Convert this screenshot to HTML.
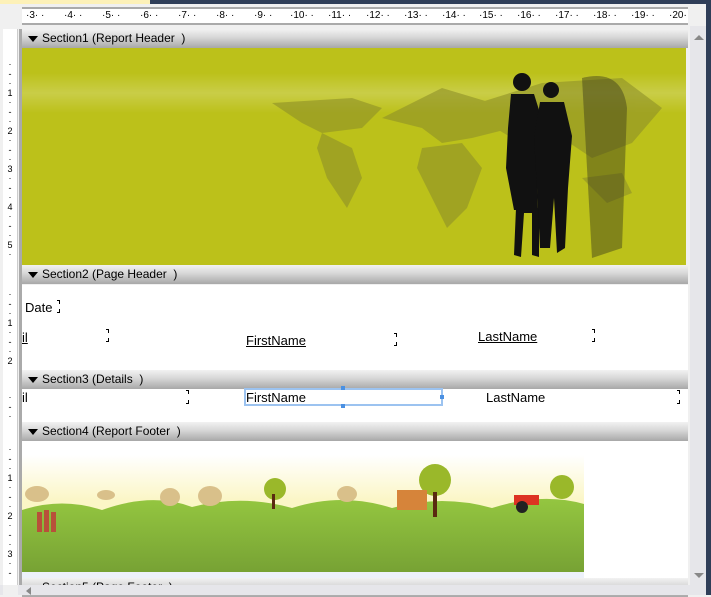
<!DOCTYPE html>
<html><head><style>
*{margin:0;padding:0;box-sizing:border-box}
body{width:711px;height:595px;overflow:hidden;background:#f0f0f0;font-family:"Liberation Sans",sans-serif;position:relative}
.a{position:absolute}
.bar{position:absolute;left:22px;width:666px;height:19px;background:linear-gradient(#f2f2f2,#d6d6d6 45%,#a8a8a8);font-size:12px;color:#000;line-height:19px;padding-left:20px}
.bar:before{content:"";position:absolute;left:6px;top:7px;border-left:5px solid transparent;border-right:5px solid transparent;border-top:6px solid #000}
.t{position:absolute;font-size:13px;color:#000}
.u{text-decoration:underline}
.bt{position:absolute;width:3px;height:4px;border-top:1px solid #000;border-right:1px solid #000}
.bb{position:absolute;width:3px;height:4px;border-bottom:1px solid #000;border-right:1px solid #000}
</style></head><body>
<div class="a" style="left:0;top:0;width:150px;height:4px;background:#fdf1b8"></div>
<div class="a" style="left:150px;top:0;width:561px;height:4px;background:#2f3e58"></div>
<div class="a" style="left:706px;top:0;width:5px;height:595px;background:#2f3e58"></div>
<div class="a" style="left:22px;top:7px;width:666px;height:18px;background:#fff;border-top:2px solid #aaa;border-bottom:2px solid #aaa"></div>
<div class="a" style="left:3px;top:29px;width:15px;height:556px;background:#fff;border-right:1px solid #ccc"></div>
<div class="a" style="left:19px;top:29px;width:3px;height:556px;background:#aaa"></div>
<div class="a" style="left:690px;top:26px;width:16px;height:559px;background:#e6e6ea"></div>
<div class="a" style="left:694px;top:35px;border-left:5px solid transparent;border-right:5px solid transparent;border-bottom:5px solid #888"></div>
<div class="a" style="left:694px;top:573px;border-left:5px solid transparent;border-right:5px solid transparent;border-top:5px solid #888"></div>

<div class="bar" style="top:29px">Section1 (Report Header&nbsp; )</div>
<div class="a" style="left:22px;top:48px;width:664px;height:217px;background:#bcc11a;overflow:hidden">
<div class="a" style="left:0;top:25px;width:664px;height:40px;background:linear-gradient(rgba(255,255,255,0),rgba(255,255,255,.2),rgba(255,255,255,0))"></div>
<svg class="a" style="left:0;top:0" width="664" height="217">
<g fill="#8e9028" opacity=".6">
<path d="M250 55 L330 50 L360 60 L340 80 L300 85 L280 75 Z"/>
<path d="M300 85 L330 100 L340 130 L325 160 L305 130 L295 100 Z"/>
<path d="M360 70 L420 40 L470 55 L490 80 L450 90 L420 95 L400 80 Z"/>
<path d="M400 100 L440 95 L460 120 L445 160 L425 180 L410 150 L395 120 Z"/>
<path d="M440 60 L520 35 L600 30 L640 60 L610 95 L570 110 L540 90 L490 90 Z"/>
<path d="M560 130 L600 125 L610 145 L585 155 Z"/>
</g>
<g fill="#3a3a1a" opacity=".45"><path d="M560 30 Q600 20 605 60 L600 200 L570 210 Z"/></g>
<g fill="#111">
<circle cx="500" cy="34" r="9"/>
<path d="M489 46 L512 46 L522 78 L514 100 L516 162 L504 162 L492 162 L484 120 L486 80 Z"/>
<path d="M494 160 L492 207 L499 209 L502 165 L510 165 L510 207 L517 209 L517 160 Z"/>
<circle cx="529" cy="42" r="8"/>
<path d="M518 54 L542 54 L550 88 L546 140 L543 200 L535 205 L532 150 L528 200 L518 200 L515 140 L512 90 Z"/>
</g>
</svg>
</div>

<div class="bar" style="top:265px">Section2 (Page Header&nbsp; )</div>
<div class="a" style="left:22px;top:285px;width:666px;height:85px;background:#fff"></div>
<div class="t" style="left:25px;top:300px">Date</div>
<div class="bt" style="left:57px;top:300px"></div><div class="bb" style="left:57px;top:309px"></div>
<div class="t u" style="left:22px;top:330px">il</div>
<div class="bt" style="left:106px;top:329px"></div><div class="bb" style="left:106px;top:338px"></div>
<div class="t u" style="left:246px;top:333px">FirstName</div>
<div class="bt" style="left:394px;top:333px"></div><div class="bb" style="left:394px;top:342px"></div>
<div class="t u" style="left:478px;top:329px">LastName</div>
<div class="bt" style="left:592px;top:329px"></div><div class="bb" style="left:592px;top:338px"></div>

<div class="bar" style="top:370px">Section3 (Details&nbsp; )</div>
<div class="a" style="left:22px;top:389px;width:666px;height:33px;background:#fff"></div>
<div class="t" style="left:22px;top:390px">il</div>
<div class="bt" style="left:186px;top:390px"></div><div class="bb" style="left:186px;top:400px"></div>
<div class="a" style="left:244px;top:388px;width:199px;height:18px;border:2px solid #9cc3f0"></div>
<div class="a" style="left:341px;top:386px;width:4px;height:4px;background:#4a90e2"></div>
<div class="a" style="left:341px;top:404px;width:4px;height:4px;background:#4a90e2"></div>
<div class="a" style="left:440px;top:395px;width:4px;height:4px;background:#4a90e2"></div>
<div class="t" style="left:246px;top:390px">FirstName</div>
<div class="t" style="left:486px;top:390px">LastName</div>
<div class="bt" style="left:677px;top:390px"></div><div class="bb" style="left:677px;top:400px"></div>

<div class="bar" style="top:422px">Section4 (Report Footer&nbsp; )</div>
<div class="a" style="left:22px;top:441px;width:666px;height:137px;background:#fff"></div>
<div class="a" style="left:22px;top:442px;width:562px;height:130px;background:linear-gradient(#fff 10%,#fbf6c6 45%,#fbf6c6 55%);overflow:hidden">
<svg class="a" style="left:0;top:0" width="562" height="130">
<defs><linearGradient id="g" x1="0" y1="0" x2="0" y2="1"><stop offset="0" stop-color="#94c640"/><stop offset="1" stop-color="#77a234"/></linearGradient></defs>
<path d="M0 68 Q40 55 80 68 Q130 50 170 65 Q220 52 270 66 Q320 50 370 66 Q420 52 470 66 Q520 50 562 62 L562 130 L0 130Z" fill="url(#g)"/>
<g fill="#d9c08a"><ellipse cx="15" cy="52" rx="12" ry="8"/><ellipse cx="84" cy="53" rx="9" ry="5"/><ellipse cx="148" cy="55" rx="10" ry="9"/><ellipse cx="325" cy="52" rx="10" ry="8"/><ellipse cx="188" cy="54" rx="12" ry="10"/></g>
<g fill="#9ab82a"><circle cx="253" cy="47" r="11"/><circle cx="413" cy="38" r="16"/><circle cx="540" cy="45" r="12"/></g>
<rect x="250" y="52" width="3" height="15" fill="#5a2a10"/><rect x="411" y="50" width="4" height="25" fill="#5a2a10"/>
<rect x="375" y="48" width="30" height="20" fill="#d6843a"/>
<g fill="#b8503a"><rect x="15" y="70" width="5" height="20"/><rect x="22" y="68" width="5" height="22"/><rect x="29" y="70" width="5" height="20"/></g>
<rect x="492" y="53" width="25" height="10" fill="#d32"/><circle cx="500" cy="65" r="6" fill="#222"/>
</svg>
</div>
<div class="a" style="left:22px;top:572px;width:562px;height:6px;background:#edf1fa"></div>
<div class="bar" style="top:578px">Section5 (Page Footer&nbsp; )</div>
<div class="a" style="left:0;top:585px;width:706px;height:10px;background:#e6e6ea"></div>
<div class="a" style="left:26px;top:587px;border-top:4px solid transparent;border-bottom:4px solid transparent;border-right:5px solid #888"></div>
<div class="a" style="left:3px;top:585px;width:15px;height:10px;background:#f0f0f0"></div>

<div class="a" style="left:22px;top:10px;width:666px;height:12px;font-size:10px;line-height:12px;color:#000;white-space:nowrap">
<span class="a" style="left:4px">·3· ·</span><span class="a" style="left:42px">·4· ·</span><span class="a" style="left:80px">·5· ·</span><span class="a" style="left:118px">·6· ·</span><span class="a" style="left:156px">·7· ·</span><span class="a" style="left:194px">·8· ·</span><span class="a" style="left:232px">·9· ·</span><span class="a" style="left:268px">·10· ·</span><span class="a" style="left:306px">·11· ·</span><span class="a" style="left:344px">·12· ·</span><span class="a" style="left:382px">·13· ·</span><span class="a" style="left:420px">·14· ·</span><span class="a" style="left:457px">·15· ·</span><span class="a" style="left:495px">·16· ·</span><span class="a" style="left:533px">·17· ·</span><span class="a" style="left:571px">·18· ·</span><span class="a" style="left:609px">·19· ·</span><span class="a" style="left:647px">·20·</span>
</div>
<div class="a" style="left:4px;top:60px;width:12px;font-size:9px;line-height:9.5px;text-align:center;color:#000">·<br>-<br>·<br>1<br>·<br>-<br>·<br>2<br>·<br>-<br>·<br>3<br>·<br>-<br>·<br>4<br>·<br>-<br>·<br>5<br>·</div>
<div class="a" style="left:4px;top:290px;width:12px;font-size:9px;line-height:9.5px;text-align:center">·<br>-<br>·<br>1<br>·<br>-<br>·<br>2</div>
<div class="a" style="left:4px;top:393px;width:12px;font-size:9px;line-height:9.5px;text-align:center">·<br>-<br>·</div>
<div class="a" style="left:4px;top:445px;width:12px;font-size:9px;line-height:9.5px;text-align:center">·<br>-<br>·<br>1<br>·<br>-<br>·<br>2<br>·<br>-<br>·<br>3<br>·<br>-</div>
</body></html>
